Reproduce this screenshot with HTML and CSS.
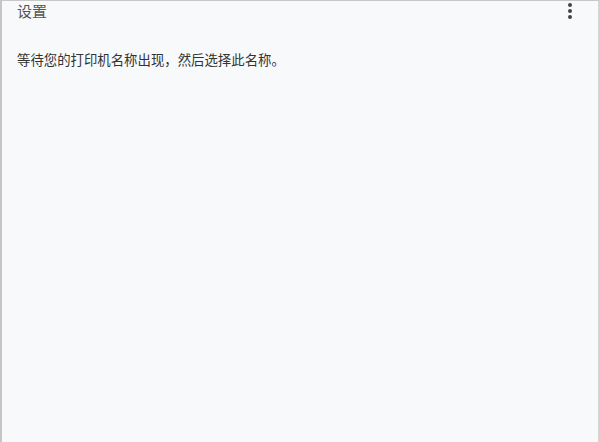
FILE: index.html
```html
<!DOCTYPE html>
<html lang="zh-CN">
<head>
    <meta charset="UTF-8">
    <title>设置</title>
    <link rel="stylesheet" href="styles.css">
</head>
<body>
    <div class="panel">
        <div class="top-bar">
            <span class="title">设置</span>
            <span class="menu-dots"><i></i><i></i><i></i></span>
        </div>
        <p class="hint">等待您的打印机名称出现，然后选择此名称。</p>
    </div>
</body>
</html>
```
FILE: styles.css
```css
html, body {
    margin: 0;
    height: 100%;
}
body {
    font-family: "Noto Sans CJK SC", "Noto Sans", sans-serif;
    background-color: #f8f9fb;
}
.panel {
    box-sizing: border-box;
    height: 100%;
    border-top: 1px solid #c8c8c8;
    border-left: 2px solid #c6c6c6;
    border-right: 2px solid #d4d4d4;
    background-color: #f8f9fb;
}
.top-bar {
    display: flex;
    justify-content: space-between;
    align-items: flex-start;
    padding: 0 26px 0 15px;
    height: 24px;
}
.title {
    font-size: 15px;
    line-height: 20px;
    color: #555;
}
.menu-dots {
    display: flex;
    flex-direction: column;
    gap: 2px;
    padding-top: 2px;
}
.menu-dots i {
    width: 4px;
    height: 4px;
    border-radius: 50%;
    background-color: #444;
}
.hint {
    margin: 25px 0 0 15px;
    font-size: 13.4px;
    line-height: 18px;
    color: #333;
}
```
